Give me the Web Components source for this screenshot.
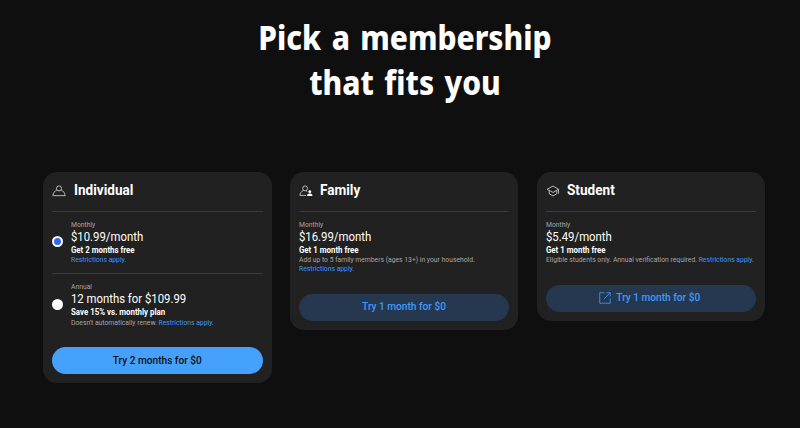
<!DOCTYPE html>
<html lang="en">
<head>
<meta charset="utf-8">
<title>Memberships</title>
<style>
  body {
    margin: 0;
    background: #0f0f0f;
    color: #fff;
    font-family: Roboto, sans-serif;
  }
</style>
</head>
<body>
<membership-page>
  <plan-card name="Individual" icon="person" cta="Try 2 months for $0" primary>
    <plan-offer period="Monthly" price="$10.99/month" deal="Get 2 months free" selectable selected>
      <fine-link>Restrictions apply.</fine-link>
    </plan-offer>
    <plan-offer period="Annual" price="12 months for $109.99" deal="Save 15% vs. monthly plan" selectable>
      Doesn't automatically renew. <fine-link>Restrictions apply.</fine-link>
    </plan-offer>
  </plan-card>
  <plan-card name="Family" icon="family" cta="Try 1 month for $0">
    <plan-offer period="Monthly" price="$16.99/month" deal="Get 1 month free">
      Add up to 5 family members (ages 13+) in your household. <fine-link>Restrictions apply.</fine-link>
    </plan-offer>
  </plan-card>
  <plan-card name="Student" icon="student" cta="Try 1 month for $0" external>
    <plan-offer period="Monthly" price="$5.49/month" deal="Get 1 month free">
      Eligible students only. Annual verification required. <fine-link>Restrictions apply.</fine-link>
    </plan-offer>
  </plan-card>
</membership-page>

<script>
const ICONS = {
  person: `<circle cx="12" cy="7.5" r="4.3"/><path d="M8.5 10.2C4.5 12 2 15.3 1.5 20h21c-.5-4.7-3-8-7-9.8"/>`,
  family: `<circle cx="10.5" cy="7.5" r="4.2"/><path d="M7.8 11C4 12.5 2 15.5 1.5 19.5h10.5M12.5 12.3l1.5.7"/><g fill="#fff" stroke="none"><circle cx="18.5" cy="13.2" r="2.5"/><path d="M14 20.5c0-3 1.7-4.2 4.5-4.2s4.5 1.2 4.5 4.2z"/></g>`,
  student: `<path d="M12 3.5L1.8 9 12 14.5 21.5 9zM5.5 11.2v5.5L12 20.5l6.5-3.8v-5.5M21.5 9v7.5"/>`,
  external: `<path d="M11 3H3v18h18v-8M14.5 3H21v6.5M21 3L10.5 13.5"/>`
};

class MembershipPage extends HTMLElement {
  constructor() {
    super();
    this.attachShadow({ mode: 'open' });
  }

  connectedCallback() {
    this.shadowRoot.innerHTML = `
      <style>
        :host {
          display: block;
          box-sizing: border-box;
          height: 428px;
          padding: 15px 35px 0 43px;
          overflow: hidden;
        }

        h1 {
          width: 400px;
          margin: 0 auto 67px 162px;
          font: 800 34px/45px "Noto Sans", sans-serif;
          word-spacing: 3px;
          text-align: center;
          transform: scaleX(.88);
        }

        .plans {
          display: grid;
          grid-template-columns: repeat(3, 228.5px);
          justify-content: space-between;
          align-items: start;
        }
      </style>
      <h1>Pick a membership<br>that fits you</h1>
      <div class="plans"><slot></slot></div>
    `;
  }
}

class PlanCard extends HTMLElement {
  constructor() {
    super();
    this.attachShadow({ mode: 'open' });
  }

  connectedCallback() {
    const external = this.hasAttribute('external')
      ? `<plan-icon name="external"></plan-icon>` : '';

    this.shadowRoot.innerHTML = `
      <style>
        :host {
          display: block;
          box-sizing: border-box;
          padding: 0 9px 9px;
          border-radius: 14px;
          background: #212121;
        }

        header {
          display: flex;
          align-items: center;
          gap: 7.5px;
          height: 38.5px;
        }

        h2 {
          margin: 0;
          font-size: 14px;
          font-weight: 700;
          line-height: 18px;
          padding-bottom: 2px;
          transform: scaleX(.97);
          transform-origin: left;
        }

        header plan-icon {
          width: 14px;
          height: 14px;
          color: #d8d8d8;
        }

        button {
          display: flex;
          align-items: center;
          justify-content: center;
          gap: 4px;
          width: 100%;
          height: 27px;
          margin: 11.5px 0 0;
          padding: 0;
          border: 0;
          border-radius: 14px;
          background: #263850;
          color: #3d9cfa;
          font: 500 10.15px/14px Roboto, sans-serif;
        }

        :host([external]) button {
          padding-right: 3px;
        }

        button plan-icon {
          width: 14px;
          height: 14px;
        }

        :host([primary]) button {
          background: #45a1fb;
          color: #0f0f0f;
        }
      </style>
      <header><plan-icon name="${this.getAttribute('icon')}"></plan-icon><h2>${this.getAttribute('name')}</h2></header>
      <slot></slot>
      <button>${external}<span>${this.getAttribute('cta')}</span></button>
    `;
  }
}

class PlanOffer extends HTMLElement {
  constructor() {
    super();
    this.attachShadow({ mode: 'open' });
  }

  connectedCallback() {
    this.shadowRoot.innerHTML = `
      <style>
        :host {
          display: flex;
          align-items: center;
          box-sizing: border-box;
          padding: 8px 0 9px;
          border-top: 1px solid #3b3b3b;
        }

        .radio {
          display: none;
          flex: none;
          box-sizing: border-box;
          width: 11px;
          height: 11px;
          margin-right: 8px;
          border-radius: 50%;
          background: #fff;
        }

        :host([selectable]) .radio {
          display: block;
        }

        :host([selected]) .radio {
          border: 2px solid #fff;
          background: #3367f2;
        }

        .details {
          flex: 1;
          min-width: 0;
        }

        .details > div {
          transform-origin: left;
        }

        .period, .fine {
          width: 111%;
          color: #a6a6a6;
          font-size: 7.4px;
          line-height: 9px;
          transform: scaleX(.917);
        }

        .period {
          line-height: 10px;
        }

        .price {
          font-size: 12px;
          line-height: 15px;
          transform: scaleX(.945);
        }

        .deal {
          margin-bottom: .5px;
          font-size: 8.4px;
          font-weight: 700;
          line-height: 10px;
          transform: scaleX(.94);
        }
      </style>
      <div class="radio"></div>
      <div class="details">
        <div class="period">${this.getAttribute('period')}</div>
        <div class="price">${this.getAttribute('price')}</div>
        <div class="deal">${this.getAttribute('deal')}</div>
        <div class="fine"><slot></slot></div>
      </div>
    `;
  }
}

class FineLink extends HTMLElement {
  constructor() {
    super();
    this.attachShadow({ mode: 'open' });
  }

  connectedCallback() {
    this.shadowRoot.innerHTML = `
      <style>
        :host {
          display: inline-block;
          color: #3b98f8;
        }
      </style>
      <slot></slot>
    `;
  }
}

class PlanIcon extends HTMLElement {
  constructor() {
    super();
    this.attachShadow({ mode: 'open' });
  }

  connectedCallback() {
    this.shadowRoot.innerHTML = `
      <style>
        :host {
          display: block;
          flex: none;
        }

        svg {
          display: block;
          width: 100%;
          height: 100%;
          fill: none;
          stroke: currentColor;
          stroke-width: 1.4;
        }
      </style>
      <svg viewBox="0 0 24 24">${ICONS[this.getAttribute('name')]}</svg>
    `;
  }
}

customElements.define('plan-icon', PlanIcon);
customElements.define('fine-link', FineLink);
customElements.define('plan-offer', PlanOffer);
customElements.define('plan-card', PlanCard);
customElements.define('membership-page', MembershipPage);
</script>
</body>
</html>
